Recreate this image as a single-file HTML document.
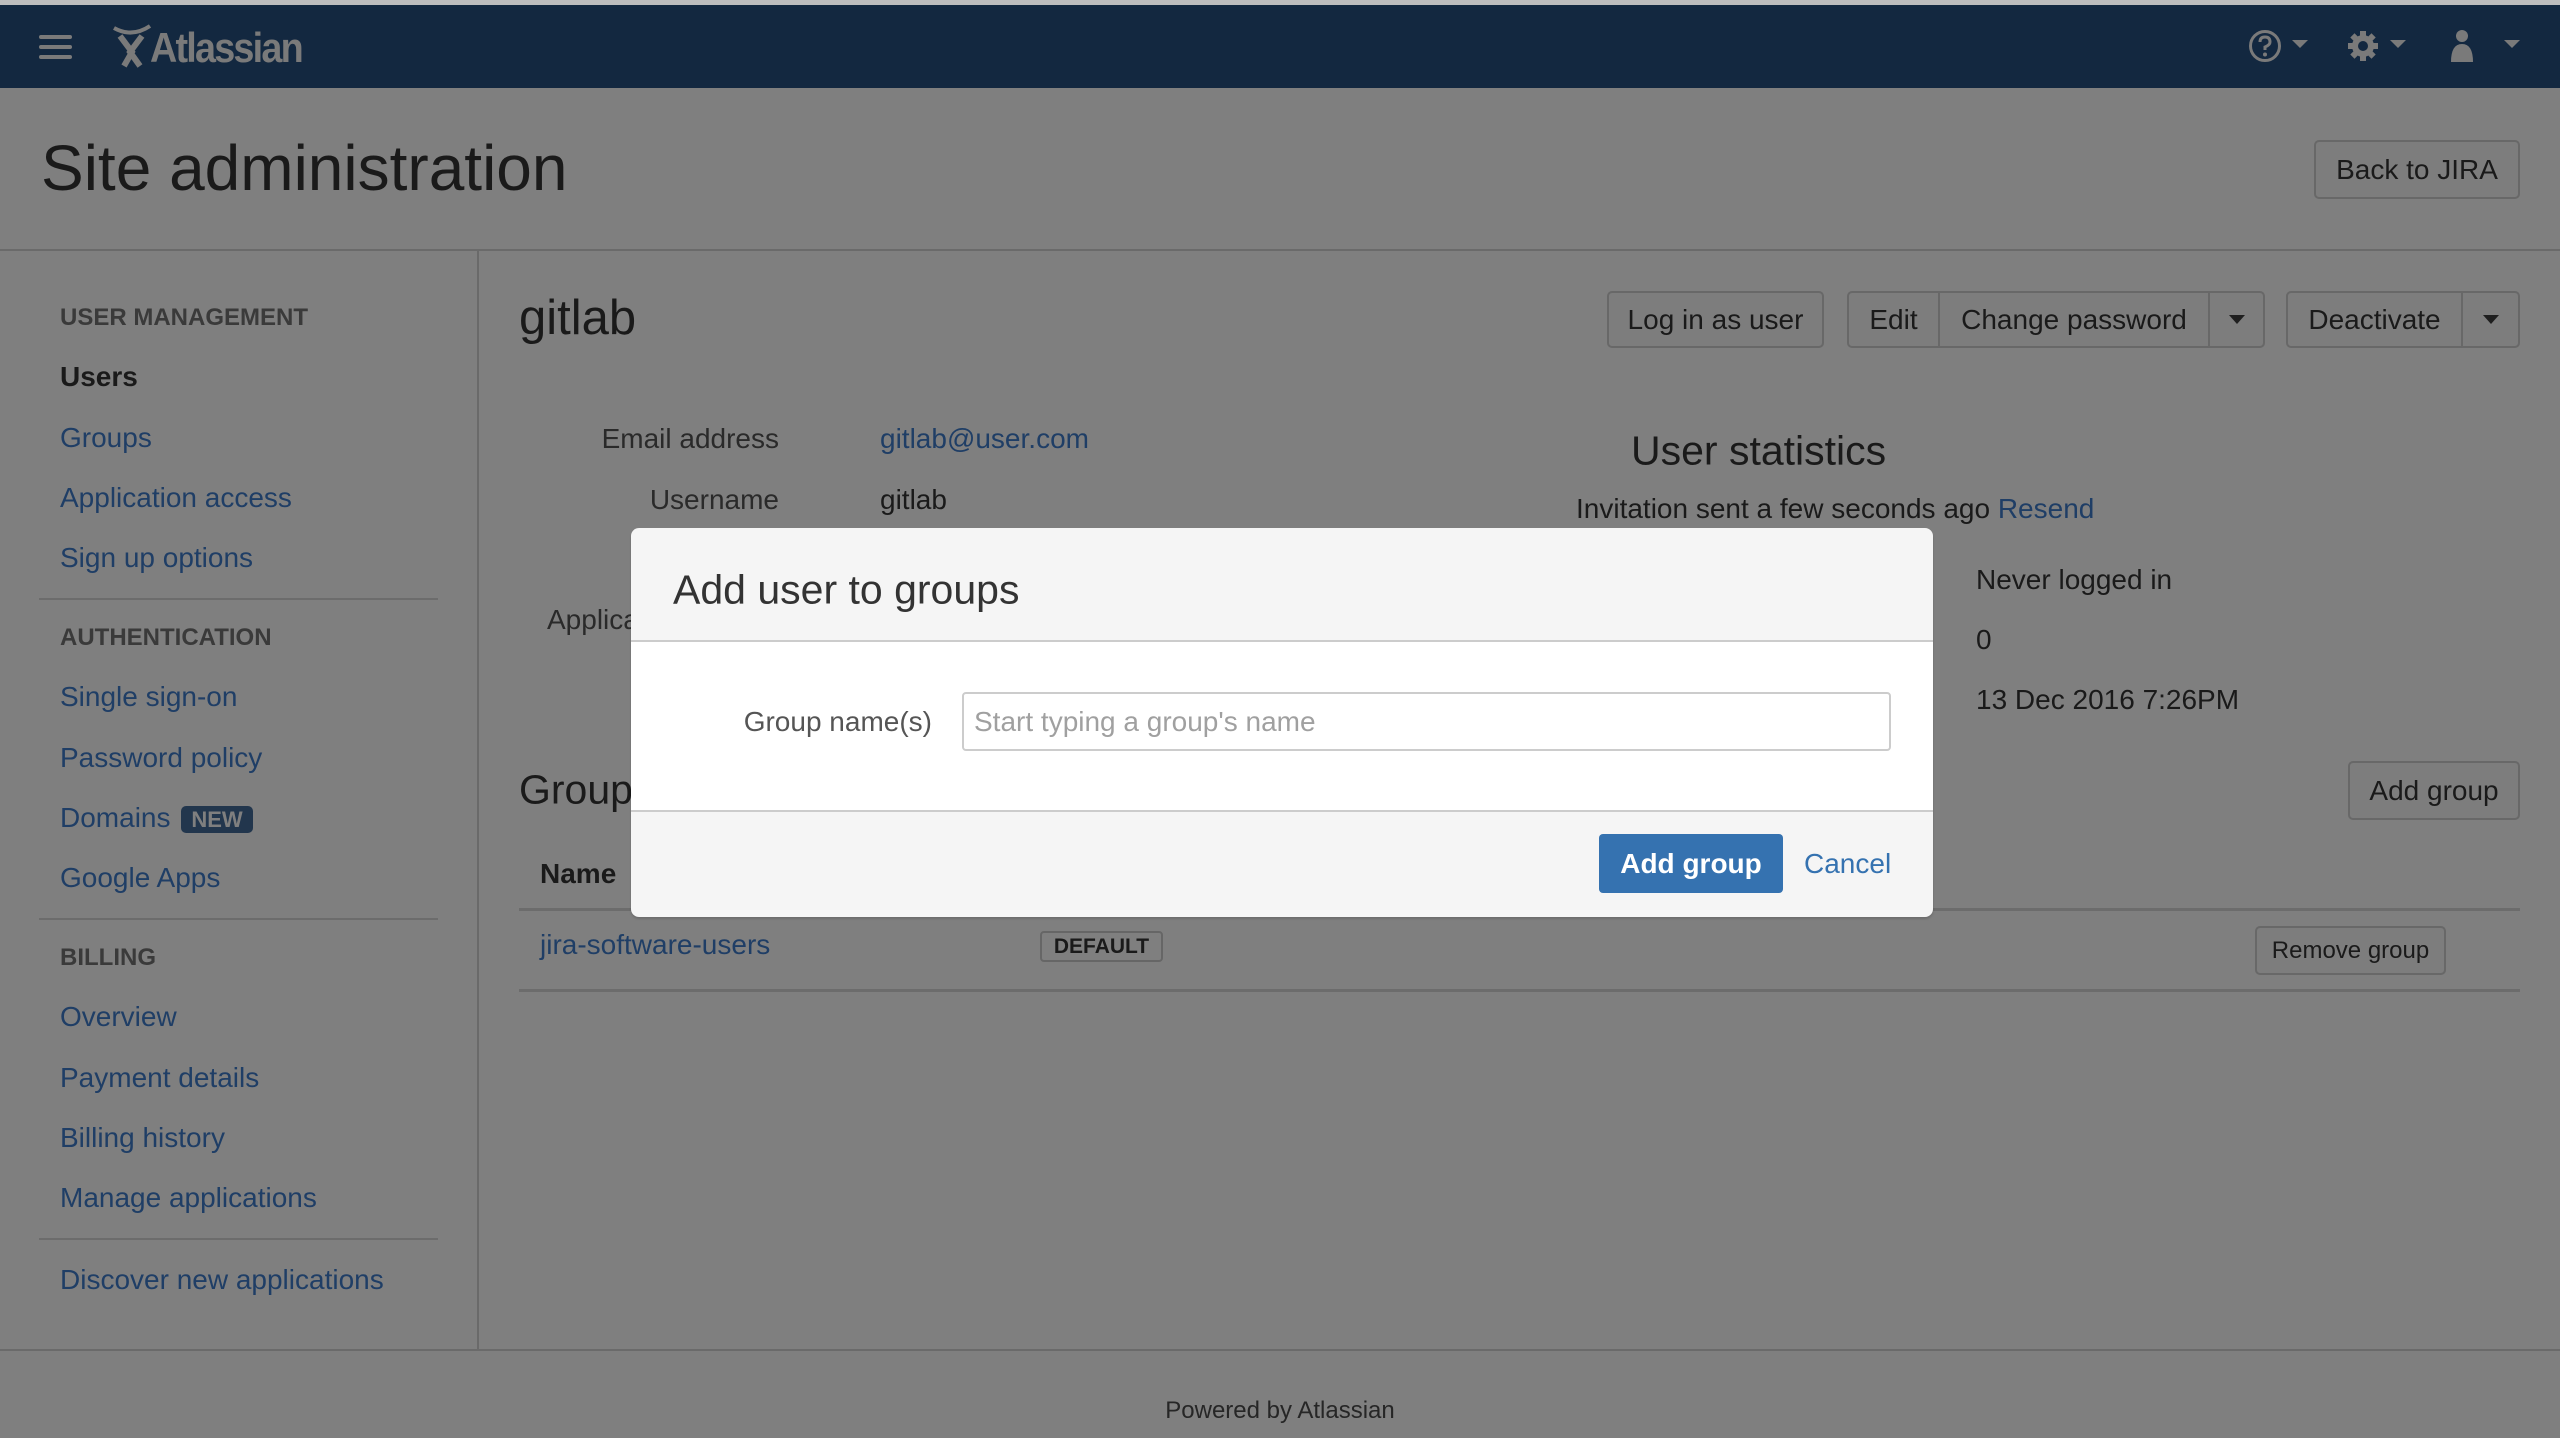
<!DOCTYPE html>
<html><head><meta charset="utf-8"><style>
*{margin:0;padding:0;box-sizing:border-box}
body{width:2560px;height:1438px;overflow:hidden;background:#7f7f7f;font-family:"Liberation Sans",Arial,sans-serif;position:relative;color:#1a1a1a}
.a{position:absolute;white-space:nowrap}
.lk{color:#1f3e66}
.t{transform:translateY(-50%)}
.side{font-size:28px;left:60px}
.hd{font-size:24px;font-weight:bold;color:#3a3a3a;left:60px}
.hr{position:absolute;height:2px;background:#6c6c6c}
.btn{position:absolute;border:2px solid #686868;border-radius:5px;background:#7d7d7d;font-size:28px;display:flex;align-items:center;justify-content:center;color:#1a1a1a}
.caret{width:0;height:0;border-left:8px solid transparent;border-right:8px solid transparent;border-top:9px solid #1f1f1f}
</style></head><body>
<div class="a" style="left:0;top:0;width:2560px;height:5px;background:#bdbdbd"></div>
<div class="a" style="left:0;top:5px;width:2560px;height:83px;background:#132840"></div>
<div class="a" style="left:39px;top:35px;width:33px;height:4px;background:#7a7a7a;border-radius:2px;box-shadow:0 10px 0 #7a7a7a,0 20px 0 #7a7a7a"></div>
<svg class="a" style="left:112px;top:22px" width="50" height="48" viewBox="0 0 50 48"><path d="M2 6 Q20 16 38 4" stroke="#7a7a7a" stroke-width="4" fill="none"/><path d="M8 14 L20 30 L12 44 M30 14 L18 30 L28 44" stroke="#7a7a7a" stroke-width="6" fill="none"/></svg>
<div class="a" style="left:150px;top:24px;font-size:42px;font-weight:bold;color:#7a7a7a;letter-spacing:-2px;transform:scaleX(0.9);transform-origin:left">Atlassian</div>
<svg class="a" style="left:2248px;top:29px" width="34" height="34" viewBox="0 0 34 34"><circle cx="17" cy="17" r="14.5" stroke="#7a7a7a" stroke-width="3" fill="none"/><path d="M12 13 Q12 8 17 8 Q22 8 22 13 Q22 16 17 18 L17 21" stroke="#7a7a7a" stroke-width="3" fill="none"/><circle cx="17" cy="25.5" r="2" fill="#7a7a7a"/></svg>
<svg class="a" style="left:2292px;top:40px" width="18" height="10"><path d="M0 0H16L8 8Z" fill="#7a7a7a"/></svg>
<svg class="a" style="left:2346px;top:29px" width="34" height="34" viewBox="0 0 34 34"><g fill="#7a7a7a"><circle cx="17" cy="17" r="11"/><g stroke="#7a7a7a" stroke-width="6"><path d="M17 2V32M2 17H32M6.4 6.4L27.6 27.6M27.6 6.4L6.4 27.6"/></g></g><circle cx="17" cy="17" r="5" fill="#132840"/></svg>
<svg class="a" style="left:2390px;top:40px" width="18" height="10"><path d="M0 0H16L8 8Z" fill="#7a7a7a"/></svg>
<svg class="a" style="left:2450px;top:29px" width="24" height="34" viewBox="0 0 24 34"><circle cx="12" cy="7" r="6" fill="#7a7a7a"/><path d="M1 33 Q1 15 12 15 Q23 15 23 33Z" fill="#7a7a7a"/></svg>
<svg class="a" style="left:2504px;top:40px" width="18" height="10"><path d="M0 0H16L8 8Z" fill="#7a7a7a"/></svg>

<div class="a t" style="left:41px;top:168px;font-size:64px;color:#1a1a1a">Site administration</div>
<div class="btn" style="left:2314px;top:140px;width:206px;height:59px">Back to JIRA</div>
<div class="hr" style="left:0;top:249px;width:2560px;background:#6a6a6a"></div>
<div class="a" style="left:477px;top:251px;width:2px;height:1100px;background:#6a6a6a"></div>
<div class="hr" style="left:0;top:1349px;width:2560px;background:#6a6a6a"></div>
<div class="a t" style="left:0;width:2560px;text-align:center;top:1411px;font-size:24px;color:#262626">Powered by Atlassian</div>

<div class="a t hd" style="top:318px">USER MANAGEMENT</div>
<div class="a t side" style="top:377px;font-weight:bold">Users</div>
<div class="a t side lk" style="top:438px">Groups</div>
<div class="a t side lk" style="top:498px">Application access</div>
<div class="a t side lk" style="top:558px">Sign up options</div>
<div class="hr" style="left:39px;top:598px;width:399px"></div>
<div class="a t hd" style="top:638px">AUTHENTICATION</div>
<div class="a t side lk" style="top:697px">Single sign-on</div>
<div class="a t side lk" style="top:758px">Password policy</div>
<div class="a t side lk" style="top:818px">Domains</div>
<div class="a" style="left:181px;top:806px;width:72px;height:27px;background:#22364d;border-radius:5px;color:#7f7f7f;font-size:22px;font-weight:bold;text-align:center;line-height:27px">NEW</div>
<div class="a t side lk" style="top:878px">Google Apps</div>
<div class="hr" style="left:39px;top:918px;width:399px"></div>
<div class="a t hd" style="top:958px">BILLING</div>
<div class="a t side lk" style="top:1017px">Overview</div>
<div class="a t side lk" style="top:1078px">Payment details</div>
<div class="a t side lk" style="top:1138px">Billing history</div>
<div class="a t side lk" style="top:1198px">Manage applications</div>
<div class="hr" style="left:39px;top:1238px;width:399px"></div>
<div class="a t side lk" style="top:1280px">Discover new applications</div>

<div class="a t" style="left:519px;top:318px;font-size:49px">gitlab</div>
<div class="btn" style="left:1607px;top:291px;width:217px;height:57px">Log in as user</div>
<div class="btn" style="left:1847px;top:291px;width:418px;height:57px;justify-content:flex-start">
<div style="width:91px;text-align:center;border-right:2px solid #686868;height:100%;line-height:53px">Edit</div>
<div style="width:270px;text-align:center;border-right:2px solid #686868;height:100%;line-height:53px">Change password</div>
<div style="flex:1;display:flex;justify-content:center"><div class="caret"></div></div></div>
<div class="btn" style="left:2286px;top:291px;width:234px;height:57px;justify-content:flex-start">
<div style="width:175px;text-align:center;border-right:2px solid #686868;height:100%;line-height:53px">Deactivate</div>
<div style="flex:1;display:flex;justify-content:center"><div class="caret"></div></div></div>

<div class="a t" style="right:1781px;top:439px;font-size:28px;color:#2a2a2a">Email address</div>
<div class="a t lk" style="left:880px;top:439px;font-size:28px">gitlab@user.com</div>
<div class="a t" style="right:1781px;top:500px;font-size:28px;color:#2a2a2a">Username</div>
<div class="a t" style="left:880px;top:500px;font-size:28px">gitlab</div>
<div class="a t" style="left:547px;top:620px;font-size:28px;color:#2a2a2a">Applica</div>
<div class="a t" style="left:1631px;top:451px;font-size:41px">User statistics</div>
<div class="a t" style="left:1576px;top:509px;font-size:28px">Invitation sent a few seconds ago <span class="lk">Resend</span></div>
<div class="a t" style="left:1976px;top:580px;font-size:28px">Never logged in</div>
<div class="a t" style="left:1976px;top:640px;font-size:28px">0</div>
<div class="a t" style="left:1976px;top:700px;font-size:28px">13 Dec 2016 7:26PM</div>
<div class="a t" style="left:519px;top:790px;font-size:41px">Group</div>
<div class="btn" style="left:2348px;top:761px;width:172px;height:59px">Add group</div>
<div class="a t" style="left:540px;top:874px;font-size:28px;font-weight:bold">Name</div>
<div class="hr" style="left:519px;top:908px;width:2001px;height:3px"></div>
<div class="a t lk" style="left:540px;top:945px;font-size:28px">jira-software-users</div>
<div class="a" style="left:1040px;top:931px;width:123px;height:31px;border:2px solid #666;border-radius:4px;font-size:21px;font-weight:bold;text-align:center;line-height:27px">DEFAULT</div>
<div class="btn" style="left:2255px;top:926px;width:191px;height:49px;font-size:24px">Remove group</div>
<div class="hr" style="left:519px;top:989px;width:2001px;height:3px"></div>

<div class="a" style="left:631px;top:528px;width:1302px;height:389px;background:#f5f5f5;border-radius:8px;overflow:hidden;box-shadow:0 2px 2px rgba(0,0,0,0.15);z-index:5">
<div class="a t" style="left:42px;top:62px;font-size:41px;color:#333">Add user to groups</div>
<div class="a" style="left:0;top:112px;width:1302px;height:172px;background:#fff;border-top:2px solid #ccc;border-bottom:2px solid #ccc"></div>
<div class="a t" style="right:1001px;top:194px;font-size:28px;color:#555">Group name(s)</div>
<div class="a" style="left:331px;top:164px;width:929px;height:59px;border:2px solid #ccc;border-radius:4px;background:#fff"></div>
<div class="a t" style="left:343px;top:194px;font-size:28px;color:#a0a0a0">Start typing a group's name</div>
<div class="a" style="left:968px;top:306px;width:184px;height:59px;background:#3572b0;border-radius:4px;color:#fff;font-size:28px;font-weight:bold;text-align:center;line-height:59px">Add group</div>
<div class="a t" style="left:1173px;top:336px;font-size:28px;color:#3572b0">Cancel</div>
</div>
</body></html>
